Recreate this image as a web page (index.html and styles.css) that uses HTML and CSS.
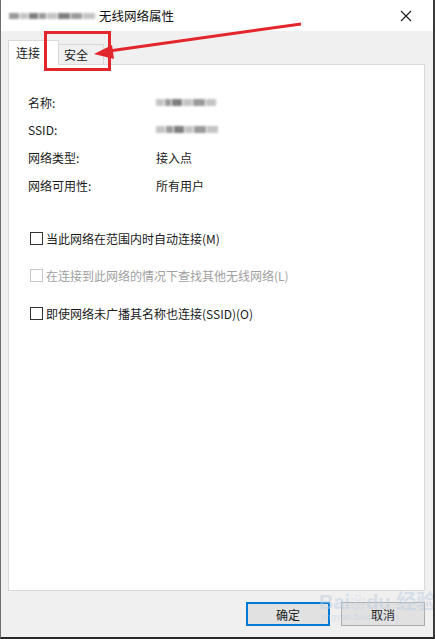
FILE: index.html
```html
<!DOCTYPE html>
<html lang="zh-CN">
<head>
  <meta charset="UTF-8" />
  <title>无线网络属性</title>
  <link rel="stylesheet" href="styles.css">
</head>
<body>
  <div class="window">
    <div class="titlebar">
      <div class="blur-name">
        <span class="px w10 d1"></span><span class="px w8 d2"></span><span class="px w9 d3"></span><span class="px w7 d1"></span><span class="px w10 d2"></span><span class="px w12 d3"></span><span class="px w11 d1"></span><span class="px w12 d2"></span>
      </div>
      <span class="title">无线网络属性</span>
      <svg class="close" width="12" height="12" viewBox="0 0 12 12">
        <path d="M1 1 L11 11 M11 1 L1 11" stroke="#1a1a1a" stroke-width="1.1" fill="none" />
      </svg>
    </div>

    <div class="content">
      <div class="tabs">
        <div class="tab active">连接</div>
        <div class="tab">安全</div>
      </div>

      <div class="panel">
        <div class="info">
          <div class="info-row">
            <span class="label">名称:</span>
            <span class="blur-value"><span class="px w8 d2"></span><span class="px w6 d1"></span><span class="px w10 d3"></span><span class="px w9 d2"></span><span class="px w12 d1"></span><span class="px w10 d2"></span></span>
          </div>
          <div class="info-row">
            <span class="label">SSID:</span>
            <span class="blur-value"><span class="px w9 d2"></span><span class="px w7 d1"></span><span class="px w10 d3"></span><span class="px w8 d2"></span><span class="px w12 d1"></span><span class="px w11 d2"></span></span>
          </div>
          <div class="info-row">
            <span class="label">网络类型:</span>
            <span class="value">接入点</span>
          </div>
          <div class="info-row">
            <span class="label">网络可用性:</span>
            <span class="value">所有用户</span>
          </div>
        </div>

        <div class="options">
          <label class="check"><span class="box"></span>当此网络在范围内时自动连接(M)</label>
          <label class="check disabled"><span class="box"></span>在连接到此网络的情况下查找其他无线网络(L)</label>
          <label class="check"><span class="box"></span>即使网络未广播其名称也连接(SSID)(O)</label>
        </div>
      </div>

      <div class="buttons">
        <button class="btn primary">确定</button>
        <button class="btn">取消</button>
      </div>
    </div>

    <!-- annotation drawn over the dialog -->
    <svg class="markup" width="435" height="80" viewBox="0 0 435 80">
      <rect x="44.5" y="32.5" width="64" height="37" fill="none" stroke="#e3262b" stroke-width="3" />
      <path d="M300 24 L108 51" stroke="#e3262b" stroke-width="3" fill="none" />
      <path d="M93 54 L111 45 L113 59 Z" fill="#e3262b" />
    </svg>

    <div class="watermark">
      <span class="wm-big">Bai<span class="paw">❀</span>du 经验</span>
      <span class="wm-small">jingyan.baidu.com</span>
    </div>
  </div>
</body>
</html>
```

FILE: styles.css
```css
* {
  margin: 0;
  padding: 0;
  box-sizing: border-box;
}

body {
  font-family: "Noto Sans CJK SC", "Noto Sans", sans-serif;
  font-size: 12px;
  color: #1a1a1a;
  background: #f0f0f0;
}

.window {
  position: relative;
  width: 435px;
  height: 639px;
  background: #f0f0f0;
  border-left: 1px solid #6e6e6e;
  border-right: 2px solid #3a3a3a;
  border-bottom: 2px solid #2a2a2a;
  display: flex;
  flex-direction: column;
  overflow: hidden;
}

.titlebar {
  height: 31px;
  background: #ffffff;
  display: flex;
  align-items: center;
  padding: 0 0 0 8px;
  flex-shrink: 0;
}

.blur-name,
.blur-value {
  display: flex;
  align-items: center;
  gap: 1px;
  filter: blur(1.2px);
}

.blur-name {
  margin-right: 4px;
}

.px {
  display: inline-block;
  height: 6px;
}

.w5 { width: 5px; }
.w6 { width: 6px; }
.w7 { width: 7px; }
.w8 { width: 8px; }
.w9 { width: 9px; }
.w10 { width: 10px; }
.w11 { width: 11px; }
.w12 { width: 12px; }

.d1 { background: #9a9a9a; }
.d2 { background: #c4c4c4; }
.d3 { background: #7f7f7f; }

.title {
  font-size: 12.5px;
  color: #111;
}

.close {
  margin-left: auto;
  margin-right: 21px;
}

.content {
  flex: 1;
  display: flex;
  flex-direction: column;
  padding: 9px 8px 0 7px;
}

.tabs {
  display: flex;
  align-items: flex-end;
  height: 24px;
}

.tab {
  height: 20px;
  padding: 0 15px 0 5px;
  border: 1px solid #d9d9d9;
  border-bottom: none;
  border-left: none;
  background: #f0f0f0;
  display: flex;
  align-items: center;
  line-height: 1;
}

.tab.active {
  height: 25px;
  margin-bottom: -1px;
  width: 51px;
  padding: 0 0 0 7px;
  background: #ffffff;
  border-left: 1px solid #d9d9d9;
  position: relative;
}

.panel {
  height: 527px;
  background: #ffffff;
  border: 1px solid #d9d9d9;
  padding: 27px 0 0 19px;
}

.info {
  display: flex;
  flex-direction: column;
  gap: 7.7px;
}

.info-row {
  display: flex;
  align-items: center;
  height: 20px;
}

.label {
  width: 128px;
}

.blur-value .px {
  height: 7px;
}

.options {
  margin-top: 33px;
  display: flex;
  flex-direction: column;
  gap: 17.5px;
}

.check {
  display: flex;
  align-items: center;
  height: 20px;
  padding-left: 2px;
}

.box {
  width: 13px;
  height: 13px;
  border: 1px solid #333333;
  background: #ffffff;
  margin-right: 3px;
  flex-shrink: 0;
}

.check.disabled {
  color: #a0a0a0;
}

.check.disabled .box {
  border-color: #c6c6c6;
}

.buttons {
  display: flex;
  justify-content: flex-end;
  gap: 11px;
  margin-top: 11px;
}

.btn {
  width: 84px;
  height: 24px;
  font-family: inherit;
  font-size: 12px;
  color: #1a1a1a;
  background: #e1e1e1;
  border: 1px solid #adadad;
}

.btn.primary {
  border: 2px solid #0078d7;
}

.markup {
  position: absolute;
  top: 0;
  left: 0;
  pointer-events: none;
}

.watermark {
  position: absolute;
  left: 318px;
  top: 592px;
  display: flex;
  flex-direction: column;
  align-items: flex-start;
  white-space: nowrap;
  color: rgba(190, 205, 225, 0.5);
  font-family: "Liberation Sans", "Noto Sans CJK SC", sans-serif;
  pointer-events: none;
}

.wm-big {
  font-size: 20px;
  font-weight: bold;
  line-height: 1;
}

.paw {
  font-size: 16px;
}

.wm-small {
  font-size: 9px;
  margin-left: 2px;
  letter-spacing: 0.3px;
}
```
